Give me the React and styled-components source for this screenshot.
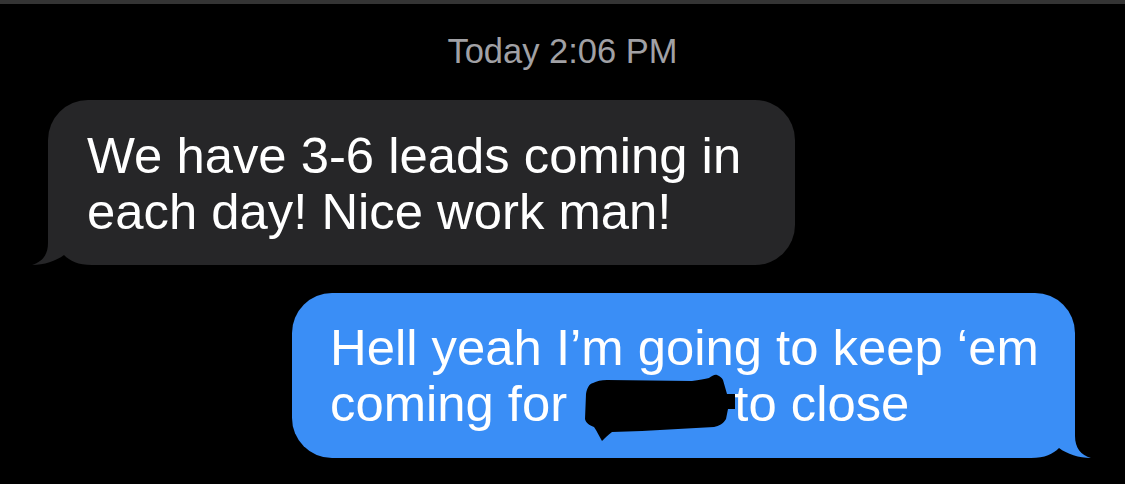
import React from 'react'
import styled, { createGlobalStyle } from 'styled-components'

const GlobalStyle = createGlobalStyle`
    html, body {
        margin: 0;
        padding: 0;
        background: #000;
    }
    body {
        font-family: "Liberation Sans", Arial, sans-serif;
        -webkit-font-smoothing: antialiased;
    }
`;

const Screen = styled.div`
    width: 1125px;
    height: 484px;
    background: #000;
    overflow: hidden;
    display: flex;
    flex-direction: column;
`;

const TopBar = styled.div`
    height: 4px;
    background: #343434;
    flex-shrink: 0;
`;

const Timestamp = styled.div`
    margin-top: 27px;
    text-align: center;
    color: #a1a1a5;
    font-size: 34.5px;
    line-height: 40px;
`;

const Thread = styled.div`
    display: flex;
    flex-direction: column;
    gap: 28px;
    padding: 29px 50px 0 48px;
`;

const Row = styled.div`
    display: flex;
    justify-content: ${p => (p.$mine ? 'flex-end' : 'flex-start')};
`;

const Bubble = styled.div`
    position: relative;
    box-sizing: border-box;
    width: ${p => p.$width}px;
    height: 165px;
    background: ${p => (p.$mine ? '#3a8ef6' : '#262628')};
    color: #fff;
    border-radius: 40px;
    padding: ${p => (p.$mine ? '27px 30px 0 38px' : '28px 30px 0 39px')};
    font-size: 50.8px;
    line-height: 56px;
    white-space: nowrap;
`;

const Text = styled.div`
    position: relative;
    z-index: 1;
`;

const Tail = styled.svg`
    position: absolute;
    bottom: 0;
    width: 60px;
    height: 50px;
    ${p => (p.$mine
        ? 'right: -16px; transform: scaleX(-1);'
        : 'left: -16px;')}
`;

// the hidden word keeps its place in the line, the scribble lies over it
const RedactSlot = styled.span`
    display: inline-block;
    position: relative;
    width: 153px;
    height: 1px;
`;

const Redacted = styled.svg`
    position: absolute;
    left: -2px;
    top: -46px;
`;

const BubbleTail = ({ mine, color }) => (
    <Tail $mine={mine} viewBox="0 0 60 50">
        <rect x="16" y="0" width="44" height="50" fill="#000" />
        <path
            d="M16 0 L16 28 C16 40 10 47 0 50 C12 50 24 46 32 40 C38 46 46 50 60 50 L60 0 Z"
            fill={color}
        />
    </Tail>
);

export default function App() {
    return (
        <>
            <GlobalStyle />
            <Screen>
                <TopBar />
                <Timestamp>Today 2:06 PM</Timestamp>
                <Thread>
                    <Row>
                        <Bubble $width={747}>
                            <Text>
                                We have 3-6 leads coming in<br />
                                each day! Nice work man!
                            </Text>
                            <BubbleTail color="#262628" />
                        </Bubble>
                    </Row>
                    <Row $mine>
                        <Bubble $mine $width={783}>
                            <Text>
                                Hell yeah I’m going to keep ‘em<br />
                                coming for{' '}
                                <RedactSlot>
                                    <Redacted width="158" height="70" viewBox="0 0 158 70">
                                        <path
                                            d="M7 20 C8 14 10 10 14 9 C18 7 22 6 28 6 L113 7 C120 6 126 5 130 4 C133 2 136 0 138 1 C141 2 143 4 144 6 L148 20 L156 20 L156 35 L149 35 L147 45 C144 50 140 52 135 53 L63 57 L33 58 C29 61 26 64 23 67 C20 62 18 57 15 53 C10 51 7 49 6 45 Z"
                                            fill="#000"
                                        />
                                    </Redacted>
                                </RedactSlot>
                                to close
                            </Text>
                            <BubbleTail mine color="#3a8ef6" />
                        </Bubble>
                    </Row>
                </Thread>
            </Screen>
        </>
    )
}
